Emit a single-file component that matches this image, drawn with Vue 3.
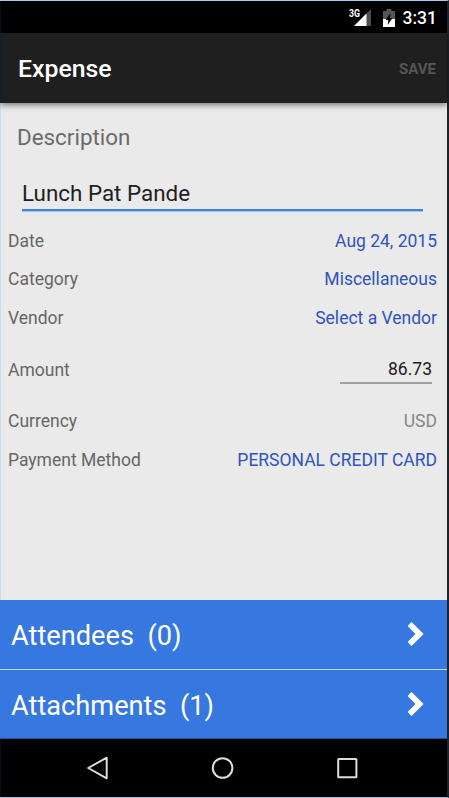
<template>
  <div class="screen">
    <header class="status-bar">
      <svg class="signal" width="23" height="18" viewBox="0 0 23 18">
        <path d="M22 1V18H5Z" fill="#4d4d4d" />
        <path d="M17.5 5.5V18H5Z" fill="#fff" />
        <text x="0" y="9" class="network" textLength="11" lengthAdjust="spacingAndGlyphs">3G</text>
      </svg>
      <svg class="battery" width="12" height="18" viewBox="0 0 12 18">
        <path d="M0 2H3.5V0H8.5V2H12V10H0Z" fill="#555" />
        <path d="M0 10H12V18H0Z" fill="#fff" />
        <path d="M7.5 4L2.5 11H5.3L4.6 16L9.5 9H6.8Z" fill="#000" />
      </svg>
      <span class="clock">3:31</span>
    </header>

    <div class="app-bar">
      <h1 class="title">Expense</h1>
      <button class="save" type="button" disabled>SAVE</button>
    </div>

    <main class="content">
      <label class="description-label" for="description">Description</label>
      <input id="description" v-model="description" class="description-input" type="text" />

      <div v-for="field in fields" :key="field.label" :class="['row', { 'row-tall': field.editable }]">
        <span class="row-label">{{ field.label }}</span>
        <input v-if="field.editable" v-model="amount" class="amount-input" type="text" />
        <span v-else :class="['row-value', { 'row-value-muted': field.muted }]">{{ field.value }}</span>
      </div>
    </main>

    <div class="sections">
      <div v-for="section in sections" :key="section.name" class="section">
        <span class="section-name">{{ section.name }}</span>
        <span class="section-count">({{ section.count }})</span>
        <svg class="chevron" width="18" height="26" viewBox="0 0 18 26">
          <path d="M5.1 1.6L16.1 12.4Q16.7 13 16.1 13.6L5.1 24.4Q4.5 25 3.9 24.4L1.1 21.6Q0.5 21 1.1 20.4L8.5 13L1.1 5.6Q0.5 5 1.1 4.4L3.9 1.6Q4.5 1 5.1 1.6Z" />
        </svg>
      </div>
    </div>

    <nav class="nav-bar">
      <svg width="24" height="26" viewBox="0 0 24 26">
        <path d="M21.7 2.7V23.3L3.2 13Z" />
      </svg>
      <svg width="24" height="26" viewBox="0 0 24 26">
        <circle cx="12.6" cy="13" r="9.8" />
      </svg>
      <svg width="24" height="26" viewBox="0 0 24 26">
        <rect x="3.2" y="4" width="18.2" height="18.2" rx="0.5" />
      </svg>
    </nav>
  </div>
</template>

<script setup>
import { ref } from 'vue';

const description = ref('Lunch Pat Pande');
const amount = ref('86.73');

const fields = [
  { label: 'Date', value: 'Aug 24, 2015' },
  { label: 'Category', value: 'Miscellaneous' },
  { label: 'Vendor', value: 'Select a Vendor' },
  { label: 'Amount', editable: true },
  { label: 'Currency', value: 'USD', muted: true },
  { label: 'Payment Method', value: 'PERSONAL CREDIT CARD' },
];

const sections = [
  { name: 'Attendees', count: 0 },
  { name: 'Attachments', count: 1 },
];
</script>

<style>
body {
  margin: 0;
}
</style>

<style scoped>
.screen {
  display: flex;
  flex-direction: column;
  box-sizing: border-box;
  width: 449px;
  height: 798px;
  border-top: 1px solid #a8cdf0;
  border-right: 2px solid #1c2329;
  border-bottom: 1px solid #a6c4ee;
  background: #000;
  font-family: Roboto, 'Liberation Sans', sans-serif;
}

.status-bar {
  display: flex;
  align-items: center;
  justify-content: flex-end;
  box-sizing: border-box;
  height: 32px;
  padding-right: 10px;
  border-left: 1px solid #02101e;
  background: #000;
}

.signal {
  margin-right: 11px;
}

.battery {
  margin-top: 1px;
}

.network {
  font-size: 10px;
  font-weight: 700;
  fill: #fff;
}

.clock {
  margin: 2px 0 0 8px;
  font-size: 17.5px;
  font-weight: 500;
  color: #fff;
}

.app-bar {
  position: relative;
  display: flex;
  align-items: center;
  justify-content: space-between;
  box-sizing: border-box;
  height: 70px;
  padding: 1px 11px 0 17px;
  border-left: 1px solid #12202d;
  background: #1f1f1f;
  box-shadow: 0 2px 6px rgba(0, 0, 0, 0.5);
}

.title {
  margin: 0;
  font-size: 24.8px;
  font-weight: 500;
  color: #fff;
}

.save {
  padding: 0;
  border: 0;
  background: none;
  font-family: inherit;
  font-size: 15px;
  font-weight: 700;
  color: #555;
}

.content {
  display: flex;
  flex: 1;
  flex-direction: column;
  padding: 18px 10px 0 7px;
  border-left: 1px solid #c9dcf3;
  background: #eaeaea;
}

.description-label {
  height: 32px;
  margin-left: 9px;
  font-size: 22.4px;
  line-height: 32px;
  color: #6b6b6b;
}

.description-input {
  box-sizing: border-box;
  height: 38px;
  margin: 20px 14px 10.5px;
  padding: 3px 0 0;
  border: 0;
  border-bottom: 2px solid #3b82e6;
  outline: none;
  background: none;
  box-shadow: 0 1px #a3c2ec;
  font-family: inherit;
  font-size: 22.4px;
  color: #212121;
}

.row {
  display: flex;
  align-items: center;
  justify-content: space-between;
  height: 38.5px;
  font-size: 17.5px;
  color: #666;
}

.row-tall {
  height: 65px;
}

.row-value {
  color: #2f54be;
}

.row-value-muted {
  color: #888;
}

.amount-input {
  box-sizing: border-box;
  width: 92px;
  height: 29px;
  margin: 0 5px 0 0;
  padding: 1px 0 0;
  border: 0;
  border-bottom: 2px solid #a0a0a0;
  outline: none;
  background: none;
  font-family: inherit;
  font-size: 17.5px;
  text-align: right;
  color: #212121;
}

.section {
  display: flex;
  align-items: center;
  box-sizing: border-box;
  height: 69px;
  padding: 2px 22px 0 11px;
  background: #3778e0;
  font-size: 27.2px;
  color: #fff;
}

.section + .section {
  height: 70px;
  padding-top: 3px;
  border-top: 1px solid #c3d7f6;
  border-bottom: 1px solid #2554a0;
}

.section-count {
  margin-left: 13.5px;
}

.chevron {
  margin: 0 0 3px auto;
  fill: #fff;
}

.nav-bar {
  display: flex;
  align-items: center;
  justify-content: space-between;
  box-sizing: border-box;
  height: 58px;
  padding: 0 88px 1px 84px;
  border-left: 1px solid #02101e;
  background: #000;
}

.nav-bar svg {
  fill: none;
  stroke: #dcdcdc;
  stroke-width: 2;
  stroke-linejoin: round;
}
</style>
